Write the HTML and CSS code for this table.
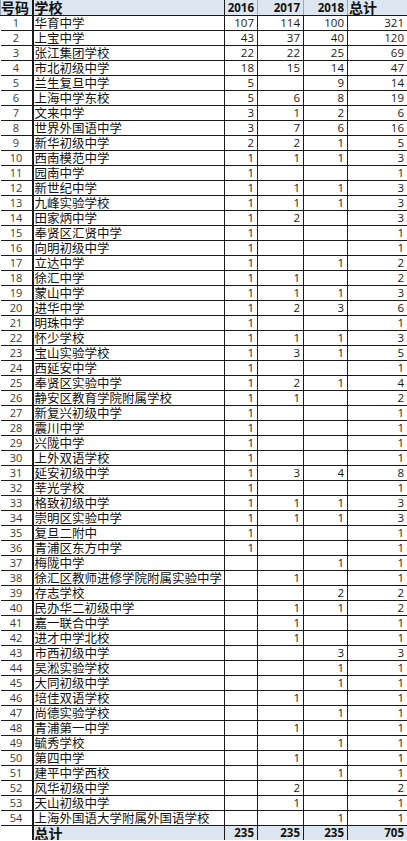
FILE: index.html
```html
<!DOCTYPE html>
<html lang="zh">
<head>
<meta charset="utf-8">
<title>学校统计</title>
<link rel="stylesheet" href="styles.css">
</head>
<body>
<table class="sheet">
<colgroup>
<col class="c-no"><col class="c-school"><col class="c-y16"><col class="c-y17"><col class="c-y18"><col class="c-total">
</colgroup>
<thead>
<tr class="head"><th class="h-no">号码</th><th class="h-school">学校</th><th class="h-num">2016</th><th class="h-num">2017</th><th class="h-num">2018</th><th class="h-total">总计</th></tr>
</thead>
<tbody>
<tr><td class="no">1</td><td class="school">华育中学</td><td class="n">107</td><td class="n">114</td><td class="n">100</td><td class="n">321</td></tr>
<tr><td class="no">2</td><td class="school">上宝中学</td><td class="n">43</td><td class="n">37</td><td class="n">40</td><td class="n">120</td></tr>
<tr><td class="no">3</td><td class="school">张江集团学校</td><td class="n">22</td><td class="n">22</td><td class="n">25</td><td class="n">69</td></tr>
<tr><td class="no">4</td><td class="school">市北初级中学</td><td class="n">18</td><td class="n">15</td><td class="n">14</td><td class="n">47</td></tr>
<tr><td class="no">5</td><td class="school">兰生复旦中学</td><td class="n">5</td><td class="n"></td><td class="n">9</td><td class="n">14</td></tr>
<tr><td class="no">6</td><td class="school">上海中学东校</td><td class="n">5</td><td class="n">6</td><td class="n">8</td><td class="n">19</td></tr>
<tr><td class="no">7</td><td class="school">文来中学</td><td class="n">3</td><td class="n">1</td><td class="n">2</td><td class="n">6</td></tr>
<tr><td class="no">8</td><td class="school">世界外国语中学</td><td class="n">3</td><td class="n">7</td><td class="n">6</td><td class="n">16</td></tr>
<tr><td class="no">9</td><td class="school">新华初级中学</td><td class="n">2</td><td class="n">2</td><td class="n">1</td><td class="n">5</td></tr>
<tr><td class="no">10</td><td class="school">西南模范中学</td><td class="n">1</td><td class="n">1</td><td class="n">1</td><td class="n">3</td></tr>
<tr><td class="no">11</td><td class="school">园南中学</td><td class="n">1</td><td class="n"></td><td class="n"></td><td class="n">1</td></tr>
<tr><td class="no">12</td><td class="school">新世纪中学</td><td class="n">1</td><td class="n">1</td><td class="n">1</td><td class="n">3</td></tr>
<tr><td class="no">13</td><td class="school">九峰实验学校</td><td class="n">1</td><td class="n">1</td><td class="n">1</td><td class="n">3</td></tr>
<tr><td class="no">14</td><td class="school">田家炳中学</td><td class="n">1</td><td class="n">2</td><td class="n"></td><td class="n">3</td></tr>
<tr><td class="no">15</td><td class="school">奉贤区汇贤中学</td><td class="n">1</td><td class="n"></td><td class="n"></td><td class="n">1</td></tr>
<tr><td class="no">16</td><td class="school">向明初级中学</td><td class="n">1</td><td class="n"></td><td class="n"></td><td class="n">1</td></tr>
<tr><td class="no">17</td><td class="school">立达中学</td><td class="n">1</td><td class="n"></td><td class="n">1</td><td class="n">2</td></tr>
<tr><td class="no">18</td><td class="school">徐汇中学</td><td class="n">1</td><td class="n">1</td><td class="n"></td><td class="n">2</td></tr>
<tr><td class="no">19</td><td class="school">蒙山中学</td><td class="n">1</td><td class="n">1</td><td class="n">1</td><td class="n">3</td></tr>
<tr><td class="no">20</td><td class="school">进华中学</td><td class="n">1</td><td class="n">2</td><td class="n">3</td><td class="n">6</td></tr>
<tr><td class="no">21</td><td class="school">明珠中学</td><td class="n">1</td><td class="n"></td><td class="n"></td><td class="n">1</td></tr>
<tr><td class="no">22</td><td class="school">怀少学校</td><td class="n">1</td><td class="n">1</td><td class="n">1</td><td class="n">3</td></tr>
<tr><td class="no">23</td><td class="school">宝山实验学校</td><td class="n">1</td><td class="n">3</td><td class="n">1</td><td class="n">5</td></tr>
<tr><td class="no">24</td><td class="school">西延安中学</td><td class="n">1</td><td class="n"></td><td class="n"></td><td class="n">1</td></tr>
<tr><td class="no">25</td><td class="school">奉贤区实验中学</td><td class="n">1</td><td class="n">2</td><td class="n">1</td><td class="n">4</td></tr>
<tr><td class="no">26</td><td class="school">静安区教育学院附属学校</td><td class="n">1</td><td class="n">1</td><td class="n"></td><td class="n">2</td></tr>
<tr><td class="no">27</td><td class="school">新复兴初级中学</td><td class="n">1</td><td class="n"></td><td class="n"></td><td class="n">1</td></tr>
<tr><td class="no">28</td><td class="school">震川中学</td><td class="n">1</td><td class="n"></td><td class="n"></td><td class="n">1</td></tr>
<tr><td class="no">29</td><td class="school">兴陇中学</td><td class="n">1</td><td class="n"></td><td class="n"></td><td class="n">1</td></tr>
<tr><td class="no">30</td><td class="school">上外双语学校</td><td class="n">1</td><td class="n"></td><td class="n"></td><td class="n">1</td></tr>
<tr><td class="no">31</td><td class="school">延安初级中学</td><td class="n">1</td><td class="n">3</td><td class="n">4</td><td class="n">8</td></tr>
<tr><td class="no">32</td><td class="school">莘光学校</td><td class="n">1</td><td class="n"></td><td class="n"></td><td class="n">1</td></tr>
<tr><td class="no">33</td><td class="school">格致初级中学</td><td class="n">1</td><td class="n">1</td><td class="n">1</td><td class="n">3</td></tr>
<tr><td class="no">34</td><td class="school">崇明区实验中学</td><td class="n">1</td><td class="n">1</td><td class="n">1</td><td class="n">3</td></tr>
<tr><td class="no">35</td><td class="school">复旦二附中</td><td class="n">1</td><td class="n"></td><td class="n"></td><td class="n">1</td></tr>
<tr><td class="no">36</td><td class="school">青浦区东方中学</td><td class="n">1</td><td class="n"></td><td class="n"></td><td class="n">1</td></tr>
<tr><td class="no">37</td><td class="school">梅陇中学</td><td class="n"></td><td class="n"></td><td class="n">1</td><td class="n">1</td></tr>
<tr><td class="no">38</td><td class="school">徐汇区教师进修学院附属实验中学</td><td class="n"></td><td class="n">1</td><td class="n"></td><td class="n">1</td></tr>
<tr><td class="no">39</td><td class="school">存志学校</td><td class="n"></td><td class="n"></td><td class="n">2</td><td class="n">2</td></tr>
<tr><td class="no">40</td><td class="school">民办华二初级中学</td><td class="n"></td><td class="n">1</td><td class="n">1</td><td class="n">2</td></tr>
<tr><td class="no">41</td><td class="school">嘉一联合中学</td><td class="n"></td><td class="n">1</td><td class="n"></td><td class="n">1</td></tr>
<tr><td class="no">42</td><td class="school">进才中学北校</td><td class="n"></td><td class="n">1</td><td class="n"></td><td class="n">1</td></tr>
<tr><td class="no">43</td><td class="school">市西初级中学</td><td class="n"></td><td class="n"></td><td class="n">3</td><td class="n">3</td></tr>
<tr><td class="no">44</td><td class="school">吴淞实验学校</td><td class="n"></td><td class="n"></td><td class="n">1</td><td class="n">1</td></tr>
<tr><td class="no">45</td><td class="school">大同初级中学</td><td class="n"></td><td class="n"></td><td class="n">1</td><td class="n">1</td></tr>
<tr><td class="no">46</td><td class="school">培佳双语学校</td><td class="n"></td><td class="n">1</td><td class="n"></td><td class="n">1</td></tr>
<tr><td class="no">47</td><td class="school">尚德实验学校</td><td class="n"></td><td class="n"></td><td class="n">1</td><td class="n">1</td></tr>
<tr><td class="no">48</td><td class="school">青浦第一中学</td><td class="n"></td><td class="n">1</td><td class="n"></td><td class="n">1</td></tr>
<tr><td class="no">49</td><td class="school">毓秀学校</td><td class="n"></td><td class="n"></td><td class="n">1</td><td class="n">1</td></tr>
<tr><td class="no">50</td><td class="school">第四中学</td><td class="n"></td><td class="n">1</td><td class="n"></td><td class="n">1</td></tr>
<tr><td class="no">51</td><td class="school">建平中学西校</td><td class="n"></td><td class="n"></td><td class="n">1</td><td class="n">1</td></tr>
<tr><td class="no">52</td><td class="school">风华初级中学</td><td class="n"></td><td class="n">2</td><td class="n"></td><td class="n">2</td></tr>
<tr><td class="no">53</td><td class="school">天山初级中学</td><td class="n"></td><td class="n">1</td><td class="n"></td><td class="n">1</td></tr>
<tr><td class="no">54</td><td class="school">上海外国语大学附属外国语学校</td><td class="n"></td><td class="n"></td><td class="n">1</td><td class="n">1</td></tr>
</tbody>
<tfoot>
<tr class="foot"><td class="f-no"></td><td class="f-label">总计</td><td class="f-num">235</td><td class="f-num">235</td><td class="f-num">235</td><td class="f-num">705</td></tr>
</tfoot>
</table>
</body>
</html>
```

FILE: styles.css
```css
html, body {
  margin: 0;
  padding: 0;
  background: #ffffff;
}

.sheet {
  width: 407px;
  table-layout: fixed;
  border-collapse: collapse;
  font-family: "Open Sans", "Liberation Sans", "Noto Sans CJK SC", sans-serif;
  color: #111;
}

.c-no { width: 32px; }
.c-school { width: 192px; }
.c-y16 { width: 33px; }
.c-y17 { width: 46px; }
.c-y18 { width: 44px; }
.c-total { width: 60px; }

.sheet th,
.sheet td {
  padding: 0;
  height: 14px;
  line-height: 14px;
  overflow: hidden;
  white-space: nowrap;
  border: 1px solid #1a1a1a;
}

.head th {
  height: 15px;
  line-height: 15px;
  background: #dce6f1;
  font-weight: bold;
  border-top: none;
  border-color: #9aa6b4;
  border-bottom-color: #1a1a1a;
}

.h-no {
  text-align: left;
  padding-left: 0;
  font-family: "Noto Sans CJK SC", sans-serif;
  font-size: 14px;
  border-left: none;
  border-right: 2px solid #1a1a1a !important;
}

.h-school {
  text-align: left;
  padding-left: 1px !important;
  font-family: "Noto Sans CJK SC", sans-serif;
  font-size: 14px;
  border-right-color: #1a1a1a !important;
}

.h-num {
  text-align: right;
  padding-right: 3px !important;
  font-size: 11.5px;
}

.h-total {
  text-align: left;
  padding-left: 1px !important;
  font-family: "Noto Sans CJK SC", sans-serif;
  font-size: 14px;
}

.no {
  text-align: center;
  font-size: 11px;
  color: #3a3a3a;
  border-left: none !important;
  border-right: 2px solid #1a1a1a !important;
}

.school {
  text-align: left;
  padding-left: 1px !important;
  font-family: "Noto Sans CJK SC", sans-serif;
  font-size: 12.5px;
  vertical-align: bottom;
  line-height: 14px !important;
}

.n {
  text-align: right;
  padding-right: 3px !important;
  font-size: 11.5px;
  color: #1a1a1a;
}

.foot td {
  height: 14px;
  background: #dce6f1;
  font-weight: bold;
  border-bottom: none;
}

.foot .f-no {
  background: #ffffff;
  border-left: none;
  border-right: 2px solid #1a1a1a;
}

.f-label {
  text-align: left;
  padding-left: 1px !important;
  font-family: "Noto Sans CJK SC", sans-serif;
  font-size: 14px;
}

.f-num {
  text-align: right;
  padding-right: 3px !important;
  font-size: 11.5px;
}
```
